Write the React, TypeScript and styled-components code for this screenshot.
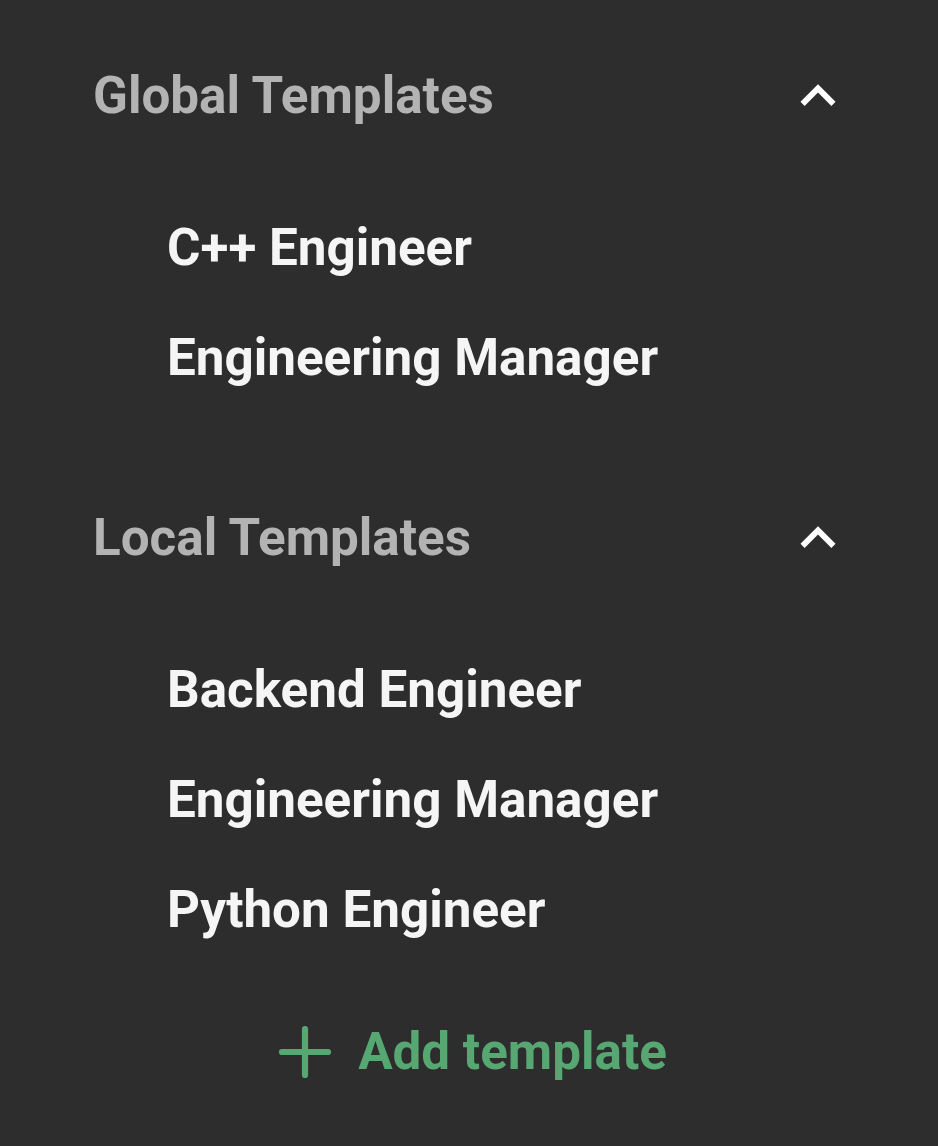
import React from "react";
import styled, { createGlobalStyle } from "styled-components";

const GlobalStyle = createGlobalStyle`
  html, body {
    margin: 0;
    padding: 0;
    background: #2d2d2d;
  }
  body {
    font-family: Roboto, "Noto Sans", "Liberation Sans", sans-serif;
    -webkit-font-smoothing: antialiased;
  }
`;

const Panel = styled.div`
  width: 938px;
  min-height: 1146px;
  box-sizing: border-box;
  background: #2d2d2d;
  padding-top: 60px;
  display: flex;
  flex-direction: column;
`;

const Section = styled.section`
  display: flex;
  flex-direction: column;
  & + & {
    margin-top: 89px;
  }
`;

const Header = styled.div`
  height: 72px;
  display: flex;
  align-items: center;
  justify-content: space-between;
  padding: 0 85px 0 93px;
`;

const Title = styled.h2`
  margin: 0;
  font-size: 51.2px;
  line-height: 72px;
  font-weight: 700;
  color: #b3b3b3;
`;

const ToggleButton = styled.button`
  width: 70px;
  height: 70px;
  padding: 0;
  border: none;
  background: transparent;
  color: #ffffff;
  display: flex;
  align-items: center;
  justify-content: center;
  cursor: pointer;
  svg {
    width: 70px;
    height: 70px;
    display: block;
  }
`;

const List = styled.ul`
  list-style: none;
  margin: 0;
  padding: 61px 0 0 0;
`;

const Item = styled.li`
  height: 110px;
  line-height: 110px;
  padding-left: 167px;
  font-size: 51.2px;
  font-weight: 700;
  color: #f5f5f5;
  white-space: nowrap;
`;

const AddRow = styled.button`
  margin: 32px 0 0 0;
  height: 110px;
  border: none;
  background: transparent;
  padding: 0 0 0 6px;
  display: flex;
  align-items: center;
  justify-content: center;
  gap: 25px;
  color: #57a773;
  font-family: inherit;
  font-size: 51.2px;
  font-weight: 700;
  line-height: 110px;
  cursor: pointer;
  svg {
    width: 56px;
    height: 56px;
    display: block;
    margin-top: -1px;
  }
`;

const ChevronUp = () => (
  <svg viewBox="0 0 24 24" aria-hidden="true">
    <path fill="currentColor" d="M12 8l-6 6 1.41 1.41L12 10.83l4.59 4.58L18 14z" />
  </svg>
);

const PlusIcon = () => (
  <svg viewBox="0 0 56 56" aria-hidden="true">
    <path
      d="M28 5v46M5 28h46"
      stroke="currentColor"
      strokeWidth="6.2"
      strokeLinecap="round"
      fill="none"
    />
  </svg>
);

type SectionProps = { title: string; items: string[] };

const TemplateSection = ({ title, items }: SectionProps) => (
  <Section>
    <Header>
      <Title>{title}</Title>
      <ToggleButton aria-label="Collapse">
        <ChevronUp />
      </ToggleButton>
    </Header>
    <List>
      {items.map((name) => (
        <Item key={name}>{name}</Item>
      ))}
    </List>
  </Section>
);

export default function App() {
  return (
    <>
      <GlobalStyle />
      <Panel>
        <TemplateSection
          title="Global Templates"
          items={["C++ Engineer", "Engineering Manager"]}
        />
        <TemplateSection
          title="Local Templates"
          items={["Backend Engineer", "Engineering Manager", "Python Engineer"]}
        />
        <AddRow>
          <PlusIcon />
          <span>Add template</span>
        </AddRow>
      </Panel>
    </>
  );
}
